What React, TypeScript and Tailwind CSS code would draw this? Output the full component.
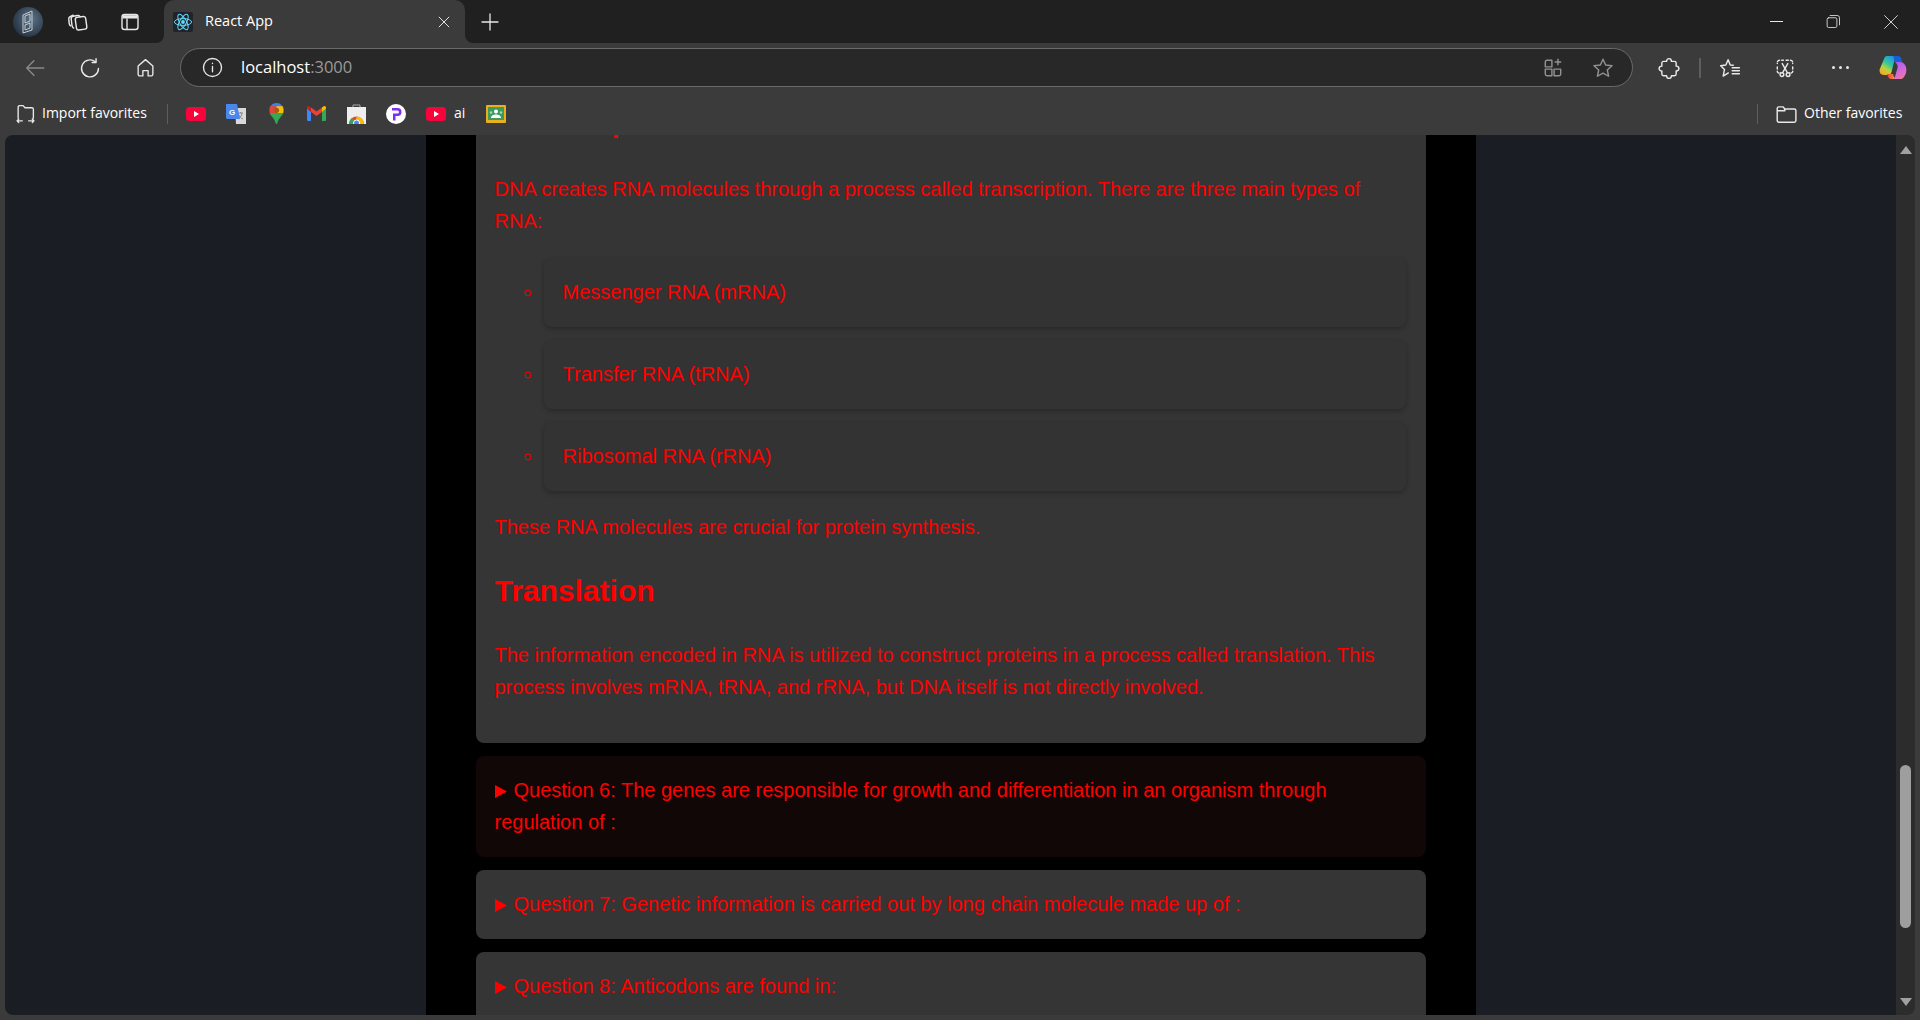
import React from "react";

const ui = { fontFamily: '"Open Sans", "Noto Sans", sans-serif' };
const page = { fontFamily: '"Liberation Sans", Arial, sans-serif' };

const S = ({ s = 20, children, o = 1, w = 1.3, c = "#e8e8e8" }: any) => (
  <svg width={s} height={s} viewBox="0 0 20 20" fill="none" stroke={c} strokeWidth={w} strokeLinecap="round" strokeLinejoin="round" opacity={o}>
    {children}
  </svg>
);
const Slot = ({ w = "w-10", className = "", children }: any) => (
  <div className={`${w} h-full flex shrink-0 items-center justify-center ${className}`}>{children}</div>
);

const Avatar = () => (
  <svg width="30" height="30" viewBox="0 0 30 30">
    <defs>
      <radialGradient id="av" cx="0.6" cy="0.4" r="0.7">
        <stop offset="0" stopColor="#5c7286" />
        <stop offset="1" stopColor="#1f2e3d" />
      </radialGradient>
    </defs>
    <circle cx="15" cy="15" r="15" fill="url(#av)" />
    <path d="M10 8l9-4v19l-9 3zM12 9l5-2v7l-5 2zM12 18l5-2v5l-5 2z" fill="none" stroke="#c6ccd2" strokeWidth="1" />
  </svg>
);
const Workspaces = () => (
  <S s={22}>
    <rect x="8" y="5.5" width="9.5" height="11.5" rx="2" transform="rotate(-8 12 11)" />
    <path d="M6 15.5c-1-.6-1.4-1.3-1.5-2.4l-.7-6c-.1-1.2.6-2.2 1.8-2.4l4-.6c1-.1 1.8.3 2.3 1" />
    <path d="M3.2 13.5c-.8-.6-1.1-1.3-1.2-2.2l-.4-3.8c-.1-1.2.4-2.1 1.5-2.5l2.6-1.2" />
  </S>
);
const VTabs = () => (
  <svg width="20" height="20" viewBox="0 0 20 20" fill="none" stroke="#e8e8e8" strokeWidth="1.4">
    <rect x="2" y="2.5" width="16" height="15" rx="2.5" />
    <path d="M2.5 3.2h15v3.3h-15z" fill="#e8e8e8" stroke="none" />
    <path d="M7 6.5v11" />
  </svg>
);
const ReactFav = () => (
  <div className="w-5 h-5 bg-[#20232a] rounded-[2px] flex items-center justify-center shrink-0">
    <svg width="20" height="20" viewBox="0 0 20 20" fill="none" stroke="#61dafb" strokeWidth="1">
      <circle cx="10" cy="10" r="1.9" fill="#61dafb" stroke="none" />
      <ellipse cx="10" cy="10" rx="8.6" ry="3.4" />
      <ellipse cx="10" cy="10" rx="8.6" ry="3.4" transform="rotate(60 10 10)" />
      <ellipse cx="10" cy="10" rx="8.6" ry="3.4" transform="rotate(120 10 10)" />
    </svg>
  </div>
);
const Yt = () => (
  <svg width="20" height="14" viewBox="0 0 20 14">
    <rect width="20" height="14" rx="3.5" fill="#f8043c" />
    <path d="M8 4l5 3-5 3z" fill="#fff" />
  </svg>
);
const Translate = () => (
  <svg width="20" height="20" viewBox="0 0 20 20">
    <path d="M9 4h11v16H10z" fill="#d9d9d9" />
    <path d="M12 9h5M14.5 8v1M16 9c-.5 3-2 5-4 6M13 11c.8 2 2 3.4 4 4" stroke="#8a8a8a" fill="none" strokeWidth="1" />
    <path d="M0 0h11l3 15H1.5a1.5 1.5 0 01-1.5-1.5z" fill="#4a86ec" />
    <text x="3" y="10.5" fontSize="8" fontWeight="700" fill="#fff" fontFamily="Liberation Sans">G</text>
  </svg>
);
const Maps = () => (
  <svg width="15" height="21" viewBox="0 0 14 20">
    <defs>
      <clipPath id="pin">
        <path d="M7 0C3.100 0 0 3.100 0 7c0 5 5 7 6.200 12.400.1.400.4.600.8.600s.7-.2.8-.6C9 14 14 12 14 7c0-3.900-3.100-7-7-7z" />
      </clipPath>
    </defs>
    <g clipPath="url(#pin)">
      <rect width="14" height="4" fill="#3b82ee" />
      <rect y="3" width="7" height="7" fill="#ea4335" />
      <rect x="7" y="3" width="7" height="7" fill="#fbbc04" />
      <rect y="9.500" width="14" height="11" fill="#34a853" />
    </g>
    <circle cx="7" cy="7" r="2.500" fill="#a9571c" />
  </svg>
);
const Gmail = () => (
  <svg width="19" height="15" viewBox="0 0 19 15">
    <path d="M0 2v12a1 1 0 001 1h3V6z" fill="#4285f4" />
    <path d="M15 6v9h3a1 1 0 001-1V2z" fill="#34a853" />
    <path d="M4 6l5.500 4L15 6V1.500L9.500 5.500 4 1.500z" fill="#ea4335" />
    <path d="M0 2.500L4 6V1.500L2.700.4A1.700 1.700 0 000 2z" fill="#c5221f" />
    <path d="M15 1.500V6l4-3.500V2a1.700 1.700 0 00-2.700-1.600z" fill="#fbbc04" />
  </svg>
);
const Store = () => (
  <svg width="19" height="20" viewBox="0 0 19 20">
    <path d="M0 3h19v17H0z" fill="#eeeeee" />
    <path d="M6 3V1h7v2" stroke="#aaa" fill="none" />
    <path d="M2 20a7.500 7.500 0 0115 0z" fill="#ea4335" />
    <path d="M2 20a7.500 7.500 0 013-6l4.500 6z" fill="#34a853" />
    <path d="M9.500 12.500a7.500 7.500 0 017.500 7.500H9z" fill="#fbbc04" />
    <circle cx="9.500" cy="19" r="3" fill="#4285f4" stroke="#fff" />
  </svg>
);
const Pico = () => (
  <svg width="20" height="20" viewBox="0 0 20 20">
    <circle cx="10" cy="10" r="10" fill="#fff" />
    <path d="M6 4h5.500a4 4 0 010 8H9.500v4.500H7V9.500h4.500a1.500 1.500 0 000-3H6z" fill="#7b2ff2" />
  </svg>
);
const Classroom = () => (
  <svg width="20" height="18" viewBox="0 0 20 18">
    <rect width="20" height="18" rx="1" fill="#e9b01c" />
    <rect x="2" y="2" width="16" height="13" fill="#3c9c5f" />
    <circle cx="10" cy="6.500" r="2" fill="#fff" />
    <path d="M5 13c0-2.500 2.500-3.500 5-3.500s5 1 5 3.500z" fill="#fff" />
    <circle cx="5" cy="7.500" r="1.200" fill="#a8d8b9" />
    <circle cx="15" cy="7.500" r="1.200" fill="#a8d8b9" />
  </svg>
);
const Copilot = () => (
  <svg width="28" height="26" viewBox="0 0 28 26">
    <defs>
      <linearGradient id="c1" x1="0.8" y1="0" x2="0.2" y2="1">
        <stop offset="0" stopColor="#1a8fee" />
        <stop offset="0.45" stopColor="#35c89a" />
        <stop offset="0.7" stopColor="#b6d53a" />
        <stop offset="1" stopColor="#f9a52a" />
      </linearGradient>
      <linearGradient id="c2" x1="0.3" y1="0" x2="0.8" y2="1">
        <stop offset="0" stopColor="#a85cf0" />
        <stop offset="0.6" stopColor="#d86ad8" />
        <stop offset="1" stopColor="#f07a8a" />
      </linearGradient>
      <linearGradient id="c3" x1="0" y1="0" x2="1" y2="0">
        <stop offset="0" stopColor="#e8402c" />
        <stop offset="1" stopColor="#f88a50" />
      </linearGradient>
    </defs>
    <path d="M8 1h11c-2 .5-3 2-3.500 4l-3 12c-.5 2-1.500 3-3.500 3H5C1.500 20 0 17 .8 14L5 4c.6-2 1.500-3 3-3z" fill="url(#c1)" />
    <path d="M14 1h5c2 0 3 1.500 3.500 3.500L23 7h-7l-1-3c-.3-1.500-.5-2.500-1-3z" fill="#1560d8" />
    <path d="M16 7h5c3 0 5 2 6 5 1 4 0 7-2 10-1 1.500-2 2-4 2H13c2-.5 3-2 3.500-4l2-7c.5-2 0-4-2.500-6z" fill="url(#c2)" />
    <path d="M8 19h6l1.500 5H12c-2 0-3-1.500-4-5z" fill="url(#c3)" />
  </svg>
);

const Toolbar = () => (
  <div className="h-[49px] flex items-center shrink-0 pl-[15px] pr-[7px]">
    <Slot>
      <S s={22} o={0.45}>
        <path d="M18 10H2.500M9 3.500L2.500 10 9 16.500" />
      </S>
    </Slot>
    <Slot className="ml-[15px]">
      <S s={22}>
        <path d="M15 4.500A7.700 7.700 0 1017.700 10.500" />
        <path d="M15.500 1.500v3.500H12" />
      </S>
    </Slot>
    <Slot className="ml-[15px]">
      <S s={21}>
        <path d="M3 8.500L10 2.500l7 6v8a1.500 1.500 0 01-1.500 1.500H12.500v-5h-5v5H4.500A1.500 1.500 0 013 16.500z" />
      </S>
    </Slot>
    <div className="ml-[15px] flex-1 h-[39px] rounded-full border border-[#6a6a6a] bg-[#282828] flex items-center pl-[21px] pr-[18px]">
      <S s={21}>
        <circle cx="10" cy="10" r="8.600" />
        <path d="M10 9v5M10 6v.3" />
      </S>
      <span className="ml-[18px] text-[16.500px] leading-none text-white" style={ui}>
        localhost<span className="text-[#9a9a9a]">:3000</span>
      </span>
      <div className="flex-1" />
      <S s={22} o={0.55}>
        <path d="M9 3H4.500A1.500 1.500 0 003 4.500V9h6zM3 11v4.500A1.500 1.500 0 004.500 17H9v-6zM11 11v6h4.500a1.500 1.500 0 001.500-1.500V11zM14.500 2v5M12 4.500h5" />
      </S>
      <div className="ml-[28px]">
        <S s={22} o={0.55}>
          <path d="M10 2l2.400 5.300 5.800.6-4.300 3.900 1.200 5.700L10 14.600l-5.100 2.900 1.200-5.700L1.800 7.900l5.800-.6z" />
        </S>
      </div>
    </div>
    <Slot className="ml-[16px]">
      <S s={22}>
        <path d="M7.800 4c0-1.500 1-2.500 2.200-2.500s2.200 1 2.200 2.500H15a1.500 1.500 0 011.500 1.500v2.800c1.500 0 2.500 1 2.500 2.200s-1 2.200-2.500 2.200v2.800A1.500 1.500 0 0115 17h-2.800c0 1.500-1 2.500-2.200 2.500s-2.200-1-2.200-2.500H5a1.500 1.500 0 01-1.500-1.500v-2.800c-1.500 0-2.500-1-2.500-2.200s1-2.200 2.500-2.200V5.500A1.500 1.500 0 015 4z" />
      </S>
    </Slot>
    <div className="ml-[10px] w-[2px] h-[20px] bg-[#5e5e5e] shrink-0" />
    <Slot className="ml-[9px]">
      <S s={22}>
        <path d="M13 7.500l-2.800-.3L8.300 2.500 6.200 7.200l-4.700.7L5 11.300l-1.200 6 4.700-2.800" />
        <path d="M12 9.800h6.500M12 12.500h6.500M12 15.200h6.500" />
      </S>
    </Slot>
    <Slot className="ml-[15px]">
      <S s={22}>
        <path d="M7 3h1.500M11 3h2M5 3a2 2 0 00-2 2v1M15 3a2 2 0 012 2v1M3 9v2M17 9v2M3 13v.500a1.500 1.500 0 001.500 1H6M17 13v.500a1.500 1.500 0 01-1.500 1H14" strokeDasharray="2 1.500" />
        <path d="M7.500 6l4.500 8M12.500 6l-4.500 8" />
        <circle cx="7.200" cy="16" r="1.700" />
        <circle cx="12.800" cy="16" r="1.700" />
      </S>
    </Slot>
    <Slot className="ml-[15px]">
      <div className="flex gap-[4px]">
        <span className="w-[3px] h-[3px] bg-[#e8e8e8] rounded-full" />
        <span className="w-[3px] h-[3px] bg-[#e8e8e8] rounded-full" />
        <span className="w-[3px] h-[3px] bg-[#e8e8e8] rounded-full" />
      </div>
    </Slot>
    <Slot className="ml-[13px]">
      <Copilot />
    </Slot>
  </div>
);

const FavBar = () => (
  <div className="h-[43px] flex items-center shrink-0 pl-[14px] pr-[18px] text-[14px] text-white" style={ui}>
    <Slot w="w-[22px]">
      <S s={21}>
        <path d="M3 14.500V4a1.500 1.500 0 011.500-1.500h3.200L9.500 4.500h6.500A1.500 1.500 0 0117.500 6v8a1.500 1.500 0 01-1 1.400M2 17h5M3.500 15.500L2 17l1.500 1.500M13 17h5M16.500 15.500L18 17l-1.500 1.500" />
      </S>
    </Slot>
    <span className="ml-[6px] w-[106px] whitespace-nowrap pb-[2px]">Import favorites</span>
    <div className="ml-[19px] w-px h-[20px] bg-[#5e5e5e]" />
    <Slot className="ml-[8px]"><Yt /></Slot>
    <Slot><Translate /></Slot>
    <Slot><Maps /></Slot>
    <Slot><Gmail /></Slot>
    <Slot><Store /></Slot>
    <Slot><Pico /></Slot>
    <Slot w="w-[28px]" className="ml-[6px]"><Yt /></Slot>
    <span className="ml-[4px] w-[11px] pb-[2px]">ai</span>
    <Slot className="ml-[11px]"><Classroom /></Slot>
    <div className="flex-1" />
    <div className="w-px h-[20px] bg-[#5e5e5e]" />
    <Slot w="w-6" className="ml-[16px]">
      <S s={22}>
        <path d="M2 16V5a1.500 1.500 0 011.500-1.500h3.700L9 5.500h8.500A1.500 1.500 0 0119 7v9a1.500 1.500 0 01-1.500 1.500h-14A1.500 1.500 0 012 16zM2 7h7l-.300-1.500" />
      </S>
    </Slot>
    <span className="ml-[6px] w-[98px] whitespace-nowrap pb-[2px]">Other favorites</span>
  </div>
);

const li = "bg-[#333333] rounded-lg pl-[19px] pr-5 pt-[18px] pb-[19px] mb-[13px] shadow-[0_2px_5px_rgba(0,0,0,0.25)]";
const q = "rounded-lg pl-[19px] pr-5 pt-[18px] pb-[19px] mb-[13px]";

const Tri = () => (
  <svg className="inline-block mr-[7px] align-[-1px]" width="12" height="13" viewBox="0 0 12 13">
    <path d="M0 0l12 6.500L0 13z" fill="#ff0000" />
  </svg>
);

const Content = () => (
  <div className="w-[1050px] mx-auto bg-black px-[50px] -mt-[100px] text-[20px] leading-[32px] text-[#ff0000]" style={page}>
    <div className="bg-[#353535] rounded-lg pl-[19px] pr-5 pb-10 mb-[13px]">
      <h2 className="pt-[69px] pb-[33px] text-[30px] leading-[36px] font-bold">Transcription</h2>
      <p>
        DNA creates RNA molecules through a process called transcription. There are three main types of RNA:
      </p>
      <ul className="mt-[21px] mb-[20px] pl-[49px] list-[circle]">
        <li className={li}>Messenger RNA (mRNA)</li>
        <li className={li}>Transfer RNA (tRNA)</li>
        <li className={li}>Ribosomal RNA (rRNA)</li>
      </ul>
      <p>These RNA molecules are crucial for protein synthesis.</p>
      <h2 className="pt-[30px] pb-[30px] text-[30px] leading-[36px] font-bold">Translation</h2>
      <p>
        The information encoded in RNA is utilized to construct proteins in a process called translation. This process involves mRNA, tRNA, and rRNA, but DNA itself is not directly involved.
      </p>
    </div>
    <details className={`${q} bg-[#110707]`}>
      <summary className="list-none"><Tri />Question 6: The genes are responsible for growth and differentiation in an organism through regulation of :</summary>
    </details>
    <details className={`${q} bg-[#353535]`}>
      <summary className="list-none"><Tri />Question 7: Genetic information is carried out by long chain molecule made up of :</summary>
    </details>
    <details className={`${q} bg-[#353535]`}>
      <summary className="list-none"><Tri />Question 8: Anticodons are found in:</summary>
    </details>
  </div>
);

const Scrollbar = () => (
  <div className="w-[19px] shrink-0 bg-[#2c2c2c] flex flex-col items-center pt-[11px] pb-[9px]">
    <div className="w-0 h-0 border-x-[6px] border-x-transparent border-b-[8px] border-b-[#a0a0a0]" />
    <div className="mt-[611px] w-[11px] h-[163px] rounded-full bg-[#9e9e9e]" />
    <div className="mt-auto w-0 h-0 border-x-[6px] border-x-transparent border-t-[8px] border-t-[#a0a0a0]" />
  </div>
);

export default function App() {
  return (
    <div className="h-screen w-full overflow-hidden bg-[#3b3b3b] flex flex-col">
      <div className="h-[43px] bg-[#202020] flex items-stretch shrink-0 pl-[8px]">
        <Slot><Avatar /></Slot>
        <Slot className="ml-[10px]"><Workspaces /></Slot>
        <Slot className="ml-[12px]"><VTabs /></Slot>
        <div className="ml-[14px] w-[301px] bg-[#3b3b3b] rounded-t-[10px] flex items-center pl-[9px] relative" style={ui}>
          <svg className="absolute -left-[8px] bottom-0" width="8" height="8" viewBox="0 0 8 8"><path d="M8 0v8H0a8 8 0 008-8z" fill="#3b3b3b" /></svg>
          <svg className="absolute -right-[8px] bottom-0" width="8" height="8" viewBox="0 0 8 8"><path d="M0 0v8h8a8 8 0 01-8-8z" fill="#3b3b3b" /></svg>
          <ReactFav />
          <span className="ml-[12px] text-[14.500px] text-white pb-[2px]">React App</span>
          <div className="ml-auto mr-[14px]">
            <S s={14} w={1.4}><path d="M3 3l14 14M17 3L3 17" /></S>
          </div>
        </div>
        <Slot className="ml-[5px]">
          <S s={20}><path d="M10 2v16M2 10h16" /></S>
        </Slot>
        <div className="flex-1" />
        <Slot w="w-[57px]"><div className="w-[13px] h-px bg-[#e8e8e8]" /></Slot>
        <Slot w="w-[57px]">
          <S s={15} w={1.1}><rect x="1.500" y="5" width="13" height="13" rx="2" /><path d="M5.500 2h9.500a3 3 0 013 3v9.500" /></S>
        </Slot>
        <Slot w="w-[58px]">
          <S s={16} w={1.1}><path d="M2 2l16 16M18 2L2 18" /></S>
        </Slot>
      </div>
      <Toolbar />
      <FavBar />
      <main className="flex-1 min-h-0 ml-[5px] mr-[5px] mb-[5px] rounded-lg overflow-hidden flex">
        <div className="flex-1 min-w-0 bg-[#1a1d24] overflow-hidden">
          <Content />
        </div>
        <Scrollbar />
      </main>
    </div>
  );
}
